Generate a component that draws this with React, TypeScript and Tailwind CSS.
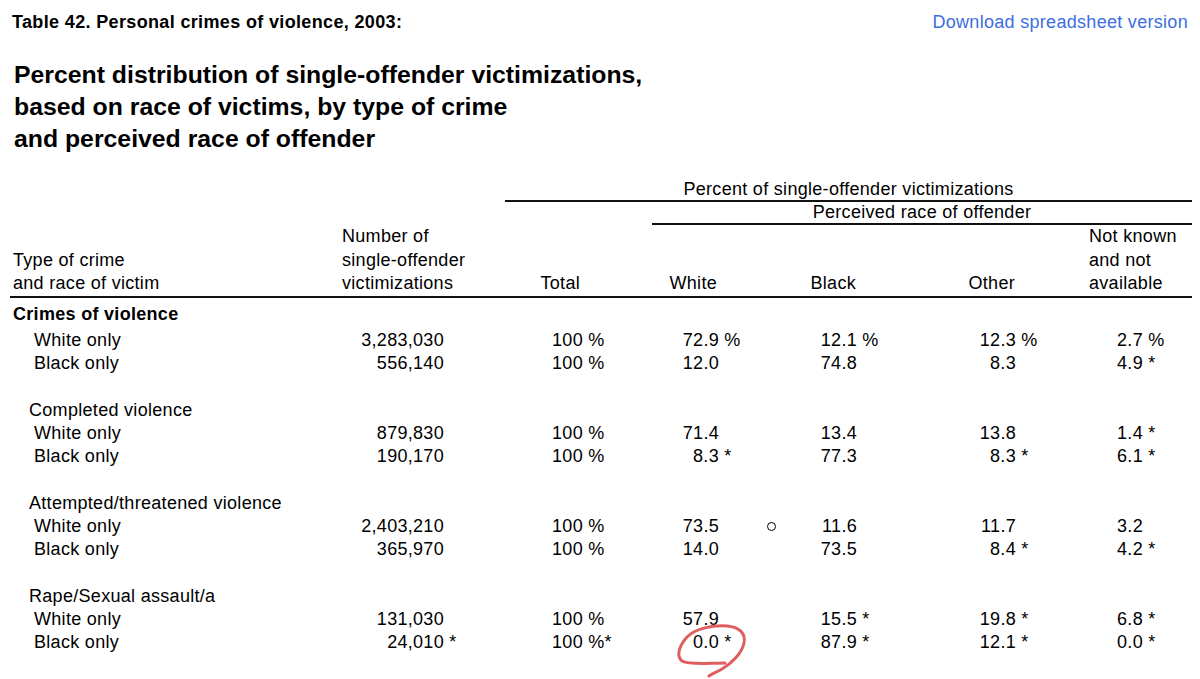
type Cell = { v: string; s?: string; mark?: "ring" | "red" };
type Row = { label: string; n: Cell; cells: Cell[] };
type Group = { title: string; bold?: boolean; rows: Row[] };

const cols = "grid grid-cols-[332px_102px_139px_136px_138px_159px_127px_1fr]";

const groups: Group[] = [
  {
    title: "Crimes of violence",
    bold: true,
    rows: [
      {
        label: "White only",
        n: { v: "3,283,030" },
        cells: [{ v: "100", s: " %" }, { v: "72.9", s: " %" }, { v: "12.1", s: " %" }, { v: "12.3", s: " %" }, { v: "2.7", s: " %" }],
      },
      {
        label: "Black only",
        n: { v: "556,140" },
        cells: [{ v: "100", s: " %" }, { v: "12.0" }, { v: "74.8" }, { v: "8.3" }, { v: "4.9", s: " *" }],
      },
    ],
  },
  {
    title: "Completed violence",
    rows: [
      {
        label: "White only",
        n: { v: "879,830" },
        cells: [{ v: "100", s: " %" }, { v: "71.4" }, { v: "13.4" }, { v: "13.8" }, { v: "1.4", s: " *" }],
      },
      {
        label: "Black only",
        n: { v: "190,170" },
        cells: [{ v: "100", s: " %" }, { v: "8.3", s: " *" }, { v: "77.3" }, { v: "8.3", s: " *" }, { v: "6.1", s: " *" }],
      },
    ],
  },
  {
    title: "Attempted/threatened violence",
    rows: [
      {
        label: "White only",
        n: { v: "2,403,210" },
        cells: [{ v: "100", s: " %" }, { v: "73.5", mark: "ring" }, { v: "11.6" }, { v: "11.7" }, { v: "3.2" }],
      },
      {
        label: "Black only",
        n: { v: "365,970" },
        cells: [{ v: "100", s: " %" }, { v: "14.0" }, { v: "73.5" }, { v: "8.4", s: " *" }, { v: "4.2", s: " *" }],
      },
    ],
  },
  {
    title: "Rape/Sexual assault/a",
    rows: [
      {
        label: "White only",
        n: { v: "131,030" },
        cells: [{ v: "100", s: " %" }, { v: "57.9" }, { v: "15.5", s: " *" }, { v: "19.8", s: " *" }, { v: "6.8", s: " *" }],
      },
      {
        label: "Black only",
        n: { v: "24,010", s: " *" },
        cells: [{ v: "100", s: " %*" }, { v: "0.0", s: " *", mark: "red" }, { v: "87.9", s: " *" }, { v: "12.1", s: " *" }, { v: "0.0", s: " *" }],
      },
    ],
  },
];

function Num({ c }: { c: Cell }) {
  return (
    <div className="relative whitespace-nowrap text-right">
      {c.v}
      <span className="inline-block w-0 whitespace-pre text-left">
        {c.s ?? ""}
        {c.mark === "ring" && (
          <span className="ml-[48px] inline-block h-[9px] w-[9px] rounded-full border-[1.3px] border-black align-[1px]" />
        )}
      </span>
      {c.mark === "red" && (
        <svg
          className="pointer-events-none absolute left-[86px] top-[-15px] h-[70px] w-[90px]"
          viewBox="0 0 90 70"
          fill="none"
        >
          <path
            d="M56 47 C40 47 20 49 13 45 C7 40 10 30 18 21 C26 13 42 9 58 10 C70 11 77 17 75 27 C73 37 63 47 53 53 C48 56 44 57 40 60"
            stroke="#de5f5e"
            strokeWidth="3"
            strokeLinecap="round"
          />
        </svg>
      )}
    </div>
  );
}

export default function App() {
  return (
    <div className="min-h-screen bg-white pt-[10px] font-['Liberation_Sans',Arial,sans-serif] text-[18px] tracking-[0.3px] text-black">
      <div className="flex items-center justify-between pl-[12px] pr-[12px] leading-[24px]">
        <h2 className="text-[18px] font-bold tracking-[0.35px]">Table 42. Personal crimes of violence, 2003:</h2>
        <a className="text-[#3c6de2]">Download spreadsheet version</a>
      </div>

      <h1 className="mt-[25px] pl-[14px] text-[24.8px] font-bold leading-[32px] tracking-normal">
        Percent distribution of single-offender victimizations,
        <br />
        based on race of victims, by type of crime
        <br />
        and perceived race of offender
      </h1>

      <div className="ml-[10px] mt-[23px] w-[1182px]">
        <div className="ml-[495px] border-b-2 border-[#111] text-center leading-[22px]">
          Percent of single-offender victimizations
        </div>
        <div className="ml-[642px] border-b-2 border-[#111] text-center leading-[21px]">Perceived race of offender</div>

        <div className={`${cols} items-end border-b-2 border-[#111] leading-[23.5px]`}>
          <div className="pl-[3px]">
            Type of crime
            <br />
            and race of victim
          </div>
          <div className="whitespace-nowrap">
            Number of
            <br />
            single-offender
            <br />
            victimizations
          </div>
          <div className="pr-[3px] text-right">Total</div>
          <div className="pr-[2px] text-right">White</div>
          <div className="pr-[1px] text-right">Black</div>
          <div className="pr-[1px] text-right">Other</div>
          <div className="whitespace-nowrap pl-[73px]">
            Not known
            <br />
            and not
            <br />
            available
          </div>
          <div />
        </div>

        <div className="pt-[5px] leading-[23.25px]">
          {groups.map((g, gi) => (
            <div key={g.title} className={gi > 0 ? "mt-[23.25px]" : ""}>
              <div className={g.bold ? "mb-[3px] pl-[3px] font-bold" : "pl-[19px]"}>{g.title}</div>
              {g.rows.map((r) => (
                <div key={r.label} className={cols}>
                  <div className="pl-[24px]">{r.label}</div>
                  <Num c={r.n} />
                  {r.cells.map((c, i) => (
                    <Num key={i} c={c} />
                  ))}
                  <div />
                </div>
              ))}
            </div>
          ))}
        </div>
      </div>
    </div>
  );
}
